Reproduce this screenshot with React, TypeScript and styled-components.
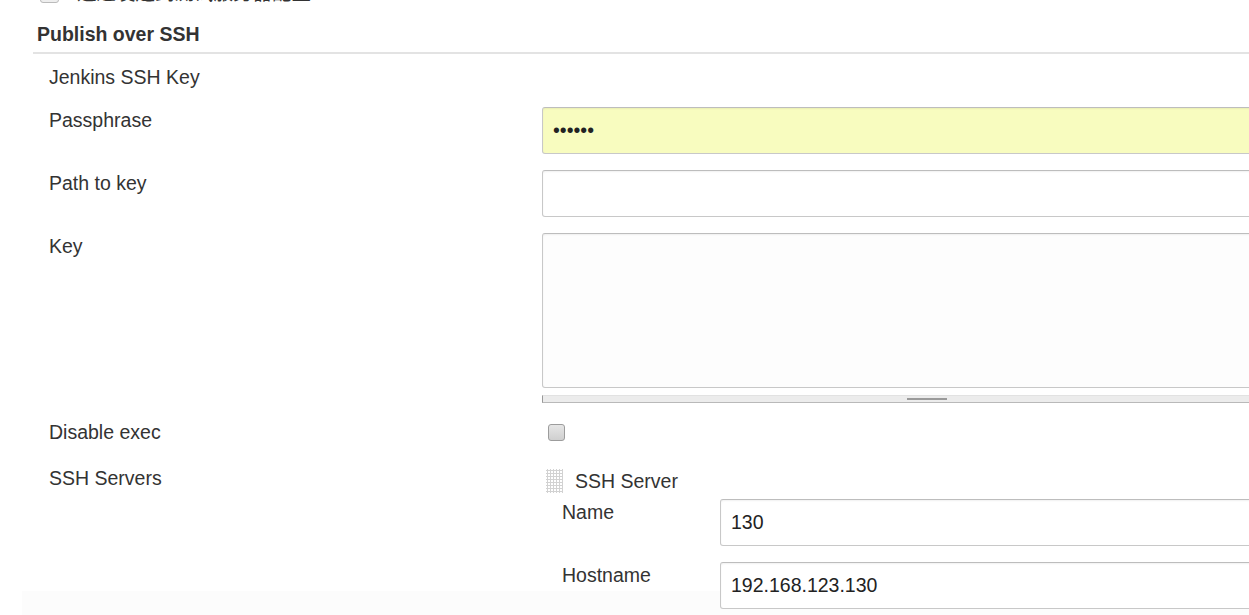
import styled, { createGlobalStyle } from "styled-components";

const GlobalStyle = createGlobalStyle`
  html, body {
    margin: 0;
    padding: 0;
    background: #fff;
    overflow: hidden;
  }
  body {
    font-family: "Liberation Sans", Arial, "Noto Sans CJK SC", sans-serif;
    color: #333;
    font-size: 19.5px;
  }
`;

const Page = styled.div`
  width: 1320px;
  height: 615px;
  overflow: hidden;
  background: linear-gradient(#fff 591px, #fcfcfc 591px) no-repeat 22px 0 / 100% 100%;
`;

const PrevRow = styled.div`
  display: flex;
  align-items: center;
  gap: 18px;
  margin: -20px 0 0 40px;
  height: 27px;
  line-height: 27px;
`;

const SmallBox = styled.span`
  width: 17px;
  height: 17px;
  border: 1px solid #bbb;
  border-radius: 3px;
  background: #eee;
`;

const Section = styled.section`
  margin-left: 33px;
`;

const Header = styled.div`
  padding: 14px 0 5px 4px;
  font-weight: bold;
  line-height: 26px;
  border-bottom: 2px solid #e3e3e3;
  margin-bottom: 10px;
`;

const Rows = styled.div`
  display: flex;
  flex-direction: column;
  gap: 16px;
  padding-left: 16px;
`;

const Row = styled.div<{ $labelWidth?: number }>`
  display: grid;
  grid-template-columns: ${(p) => p.$labelWidth ?? 493}px 1fr;
  align-items: start;
`;

const Label = styled.div<{ $offset?: number }>`
  line-height: 27px;
  white-space: nowrap;
  padding-top: ${(p) => p.$offset ?? 0}px;
`;

const TextInput = styled.input<{ $autofill?: boolean }>`
  box-sizing: border-box;
  width: 100%;
  height: 47px;
  padding: 0 10px;
  border: 1px solid #c8c8c8;
  border-top-color: #bdbdbd;
  border-radius: 3px;
  box-shadow: inset 0 1px 2px rgba(0, 0, 0, 0.06);
  background: ${(p) => (p.$autofill ? "#f8fcbf" : "#fff")};
  font: inherit;
  color: #222;
  outline: none;
`;

const KeyArea = styled.textarea`
  display: block;
  box-sizing: border-box;
  width: 100%;
  height: 155px;
  border: 1px solid #c8c8c8;
  border-top-color: #bdbdbd;
  border-radius: 3px;
  box-shadow: inset 0 1px 2px rgba(0, 0, 0, 0.06);
  background: #fdfdfd;
  resize: none;
  font: inherit;
  outline: none;
`;

const ResizeBar = styled.div`
  position: relative;
  margin-top: 7px;
  height: 6px;
  background: #ececec;
  border-top: 1px solid #e2e2e2;
  border-bottom: 1px solid #b9b9b9;
  border-left: 1px solid #999;
`;

const Grip = styled.span`
  position: absolute;
  left: 364px;
  top: 2px;
  width: 40px;
  height: 2px;
  background: #9a9a9a;
`;

const Check = styled.span`
  display: block;
  width: 15px;
  height: 15px;
  margin: 5px 0 0 6px;
  border: 1px solid #9c9c9c;
  border-radius: 3px;
  background: linear-gradient(#e6e6e6, #cfcfcf);
`;

const Chunk = styled.div`
  display: flex;
  flex-direction: column;
`;

const ChunkHead = styled.div`
  display: flex;
  align-items: center;
  gap: 12px;
  margin: 7px 0 6px 4px;
  line-height: 24px;
`;

const Dots = styled.span`
  width: 17px;
  height: 24px;
  background-image: radial-gradient(circle, #d2d2d2 1px, transparent 1.2px);
  background-size: 3px 3px;
`;

const ChunkRows = styled.div`
  display: flex;
  flex-direction: column;
  gap: 16px;
  padding-left: 20px;
`;

export default function App() {
  return (
    <Page>
      <GlobalStyle />
      <PrevRow>
        <SmallBox />
        <span>通过发送到测试服务器配置</span>
      </PrevRow>
      <Section>
        <Header>Publish over SSH</Header>
        <Rows>
          <Row>
            <Label>Jenkins SSH Key</Label>
          </Row>
          <Row>
            <Label>Passphrase</Label>
            <TextInput type="password" defaultValue="123456" $autofill readOnly />
          </Row>
          <Row>
            <Label>Path to key</Label>
            <TextInput type="text" defaultValue="" readOnly />
          </Row>
          <Row>
            <Label>Key</Label>
            <div>
              <KeyArea readOnly />
              <ResizeBar>
                <Grip />
              </ResizeBar>
            </div>
          </Row>
          <Row>
            <Label>Disable exec</Label>
            <Check />
          </Row>
          <Row>
            <Label $offset={3}>SSH Servers</Label>
            <Chunk>
              <ChunkHead>
                <Dots />
                <span>SSH Server</span>
              </ChunkHead>
              <ChunkRows>
                <Row $labelWidth={158}>
                  <Label>Name</Label>
                  <TextInput type="text" defaultValue="130" readOnly />
                </Row>
                <Row $labelWidth={158}>
                  <Label>Hostname</Label>
                  <TextInput type="text" defaultValue="192.168.123.130" readOnly />
                </Row>
              </ChunkRows>
            </Chunk>
          </Row>
        </Rows>
      </Section>
    </Page>
  );
}
